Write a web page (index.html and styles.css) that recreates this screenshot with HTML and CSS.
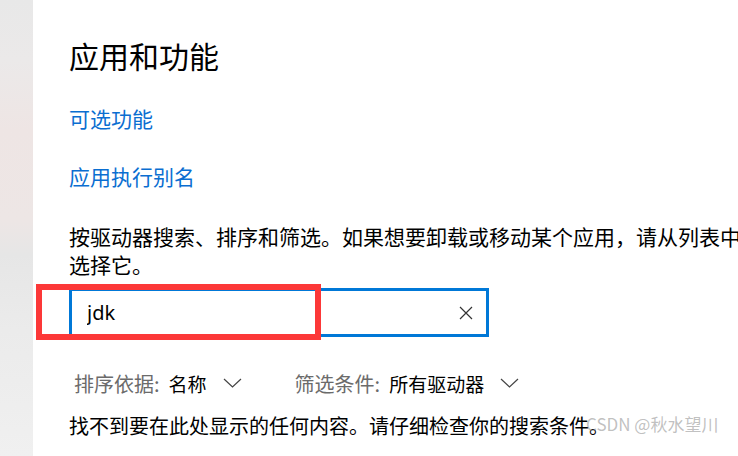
FILE: index.html
```html
<!DOCTYPE html>
<html lang="zh-CN">
<head>
    <meta charset="UTF-8">
    <meta name="viewport" content="width=device-width, initial-scale=1.0">
    <title>应用和功能</title>
    <link rel="stylesheet" href="styles.css">
</head>
<body>
    <div class="sidebar"></div>

    <div class="main">
        <h1 class="title">应用和功能</h1>

        <a class="link" href="#">可选功能</a>
        <a class="link" href="#">应用执行别名</a>

        <p class="intro">按驱动器搜索、排序和筛选。如果想要卸载或移动某个应用，请从列表中选择它。</p>

        <div class="search">
            <input class="search-input" type="text" value="jdk">
            <svg class="clear-icon" width="14" height="14" viewBox="0 0 14 14">
                <path d="M1 1 L13 13 M13 1 L1 13" stroke="#333" stroke-width="1.2" fill="none"/>
            </svg>
            <div class="mark"></div>
        </div>

        <div class="filters">
            <div class="dropdown">
                <span class="dd-label">排序依据:</span>
                <span class="dd-value">名称</span>
                <svg class="chevron" width="19" height="10" viewBox="0 0 19 10">
                    <path d="M1 1 L9.5 9 L18 1" stroke="#444" stroke-width="1.2" fill="none"/>
                </svg>
            </div>
            <div class="dropdown">
                <span class="dd-label">筛选条件:</span>
                <span class="dd-value">所有驱动器</span>
                <svg class="chevron" width="19" height="10" viewBox="0 0 19 10">
                    <path d="M1 1 L9.5 9 L18 1" stroke="#444" stroke-width="1.2" fill="none"/>
                </svg>
            </div>
        </div>

        <p class="empty">找不到要在此处显示的任何内容。请仔细检查你的搜索条件。</p>
    </div>

    <div class="watermark">CSDN @秋水望川</div>
</body>
</html>
```

FILE: styles.css
```css
html, body {
    margin: 0;
    height: 100%;
    overflow: hidden;
}
body {
    display: flex;
    background: #fff;
    font-family: "Noto Sans CJK SC", "Noto Sans", sans-serif;
    color: #000;
}
.sidebar {
    width: 33px;
    flex-shrink: 0;
    background: linear-gradient(to bottom, #e8e8e8 0, #ebe9e9 60px, #eee5e4 130px, #ede6e5 220px, #e6e6e6 255px, #ebebeb 330px, #f0f0f0 456px);
}
.main {
    flex: 1;
    padding: 35px 0 0 36px;
    overflow: hidden;
}
.title {
    margin: 0;
    font-size: 30px;
    font-weight: normal;
    line-height: 40px;
}
.link {
    display: block;
    margin-top: 28px;
    font-size: 21px;
    line-height: 30px;
    color: #0a6ed1;
    text-decoration: none;
}
.intro {
    width: 680px;
    margin: 31px 0 0;
    font-size: 21px;
    line-height: 28px;
}
.search {
    position: relative;
    display: flex;
    align-items: center;
    box-sizing: border-box;
    width: 420px;
    height: 49px;
    margin-top: 10px;
    padding: 0 13px 0 15px;
    border: 3px solid #0078d7;
}
.search-input {
    flex: 1;
    border: none;
    outline: none;
    padding: 0;
    font-family: "Noto Sans", sans-serif;
    font-size: 20px;
    color: #000;
    background: transparent;
}
/* red annotation box drawn on the screenshot */
.mark {
    position: absolute;
    left: -36px;
    top: -7px;
    width: 285px;
    height: 56px;
    box-sizing: border-box;
    border: 6px solid #fc3838;
}
.filters {
    display: flex;
    margin-top: 31px;
    padding-left: 5px;
}
.dropdown {
    display: flex;
    align-items: center;
    height: 30px;
    margin-right: 53px;
}
.dd-label {
    font-size: 20px;
    color: #6b6b6b;
    margin-right: 9px;
}
.dd-value {
    font-size: 19px;
}
.chevron {
    margin-left: 16px;
}
.empty {
    margin: 13px 0 0;
    font-size: 20px;
    line-height: 30px;
}
.watermark {
    position: absolute;
    left: 586px;
    top: 411px;
    font-family: "Noto Sans CJK SC", "Noto Sans", sans-serif;
    font-size: 17px;
    color: rgba(140, 140, 140, 0.55);
}
```
